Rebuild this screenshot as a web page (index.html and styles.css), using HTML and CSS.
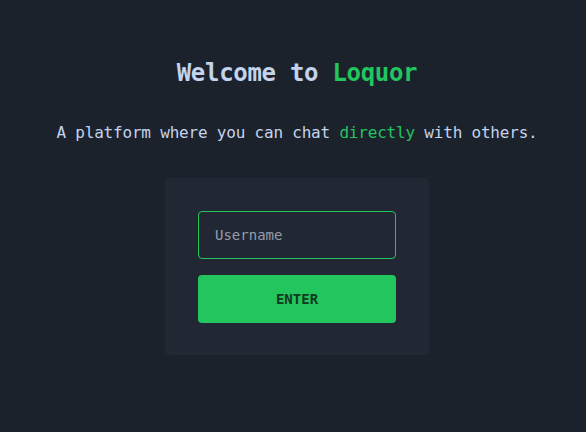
FILE: index.html
```html
<!DOCTYPE html>
<html lang="en">
<head>
<meta charset="utf-8">
<title>Loquor</title>
<link rel="stylesheet" href="styles.css">
</head>
<body>
<main class="page">
  <h1 class="title">Welcome to <span class="accent">Loquor</span></h1>
  <p class="subtitle">A platform where you can chat <span class="accent">directly</span> with others.</p>
  <form class="card">
    <input class="field" type="text" placeholder="Username">
    <button class="enter" type="button">ENTER</button>
  </form>
</main>
</body>
</html>
```
FILE: styles.css
```css
html, body {
  margin: 0;
  padding: 0;
  background: #1c222c;
  height: 100%;
}
body {
  font-family: "DejaVu Sans Mono", "Liberation Mono", monospace;
  color: #c3d3ec;
}
.page {
  display: flex;
  flex-direction: column;
  align-items: center;
  padding-top: 57px;
  padding-left: 8px;
}
.title {
  margin: 0;
  font-size: 24px;
  line-height: 32px;
  font-weight: bold;
  letter-spacing: -0.3px;
}
.accent {
  color: #22c55e;
}
.subtitle {
  margin: 32px 0 0;
  font-size: 16px;
  line-height: 24px;
  letter-spacing: -0.2px;
}
.card {
  margin-top: 33px;
  background: #222833;
  border-radius: 4px;
  padding: 33px 33px 32px;
  width: 198px;
  display: flex;
  flex-direction: column;
  gap: 16px;
}
.field {
  box-sizing: border-box;
  height: 48px;
  width: 100%;
  margin: 0;
  background: #222833;
  border: 1px solid #22c55e;
  border-radius: 4px;
  padding: 0 16px;
  font-family: inherit;
  font-size: 14px;
  color: #c3d3ec;
  outline: none;
}
.field::placeholder {
  color: #959dab;
}
.enter {
  height: 48px;
  width: 100%;
  margin: 0;
  border: none;
  border-radius: 4px;
  background: #22c55e;
  color: #0f3a1f;
  font-family: inherit;
  font-size: 14px;
  font-weight: bold;
  cursor: pointer;
}
```
